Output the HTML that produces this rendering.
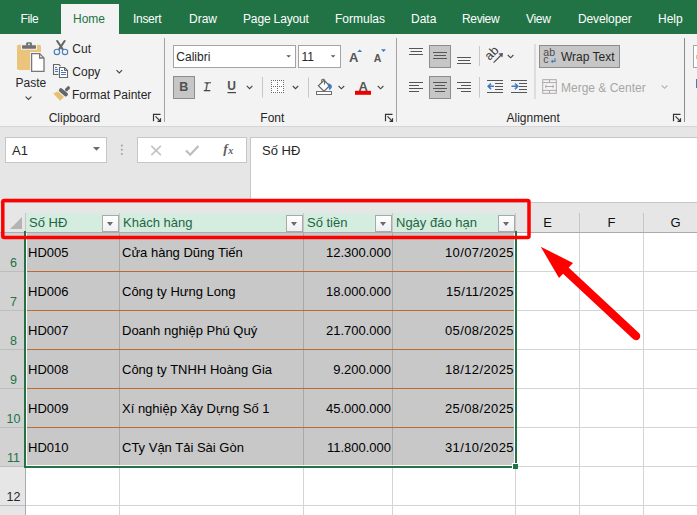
<!DOCTYPE html>
<html><head><meta charset="utf-8">
<style>
*{box-sizing:border-box;margin:0;padding:0}
html,body{width:697px;height:515px;overflow:hidden;background:#fff}
body{position:relative;font-family:"Liberation Sans",sans-serif;color:#262626}
.a{position:absolute}
.t{position:absolute;white-space:nowrap;line-height:1}
#tabs{left:0;top:0;width:697px;height:34px;background:#217346}
.tab{position:absolute;top:12px;font-size:12px;color:#fff;white-space:nowrap;line-height:14px}
#home{left:61px;top:4px;width:58px;height:30px;background:#f3f3f3}
#ribbon{left:0;top:34px;width:697px;height:92px;background:#f3f3f3}
#rb{left:0;top:126px;width:697px;height:1px;background:#d5d5d5}
#fbar{left:0;top:127px;width:697px;height:76px;background:#e6e6e6}
.lbl{font-size:12px;color:#262626}
.sep{position:absolute;width:1px;background:#c8c8c8}
.gsep{position:absolute;width:1px;background:#c6c6c6}
.box{position:absolute;background:#fff;border:1px solid #c6c6c6}
.btnsel{position:absolute;background:#c5c5c5;border:1px solid #a5a5a5}
.cell{font-size:13px;color:#000}
.dt{letter-spacing:0.4px}
.rn{font-size:12.5px}
.hd{font-size:13px;color:#1c6640}
.colh{font-size:13px;color:#111}
.ddb{position:absolute;top:215px;width:17px;height:17px;background:linear-gradient(#fff,#eef0f2);border:1px solid #a9a9a9}
.ddb:after{content:"";position:absolute;left:4px;top:6px;border-left:3.5px solid transparent;border-right:3.5px solid transparent;border-top:4px solid #6a6a6a}
</style></head><body>
<!-- tab bar -->
<div id="tabs" class="a"></div>
<div id="home" class="a"></div>
<div class="tab" style="left:20.5px;letter-spacing:-0.4px">File</div>
<div class="tab" style="left:73px;color:#217346">Home</div>
<div class="tab" style="left:133px;letter-spacing:-0.3px">Insert</div>
<div class="tab" style="left:189px">Draw</div>
<div class="tab" style="left:243px;letter-spacing:-0.15px">Page Layout</div>
<div class="tab" style="left:335px">Formulas</div>
<div class="tab" style="left:411px">Data</div>
<div class="tab" style="left:462px;letter-spacing:-0.35px">Review</div>
<div class="tab" style="left:526px;letter-spacing:-0.3px">View</div>
<div class="tab" style="left:578px;letter-spacing:-0.12px">Developer</div>
<div class="tab" style="left:658px">Help</div>

<!-- ribbon -->
<div id="ribbon" class="a"></div>
<div id="rb" class="a"></div>
<svg class="a" style="left:0;top:0" width="697" height="200" font-family="Liberation Sans" font-size="12">
<!-- Clipboard group -->
<rect x="17" y="44.8" width="24" height="25.2" rx="1.8" fill="#eac47a"/>
<path d="M21 44.5h16v5.2h-16z" fill="#f3f3f3"/>
<rect x="22" y="45.3" width="14" height="3.5" rx="0.8" fill="#707070"/>
<rect x="26.2" y="42.2" width="5.7" height="4" rx="1.2" fill="#707070"/>
<circle cx="29" cy="44.4" r="0.9" fill="#f3f3f3"/>
<path d="M30 52h11l5 5v16h-16z" fill="#f3f3f3"/>
<path d="M31.6 53.6h8l4.4 4.4v13.4h-12.4z" fill="#fff" stroke="#777" stroke-width="1.3"/>
<path d="M39.6 53.6v4.4h4.4" fill="none" stroke="#777" stroke-width="1.3"/>
<text x="15.5" y="86.8" fill="#262626">Paste</text>
<path d="M25.6 96.6l2.9 2.9l2.9-2.9" fill="none" stroke="#444" stroke-width="1.1"/>
<!-- scissors -->
<path d="M57.2 41l5.4 8.2M64.6 41l-5.4 8.2" fill="none" stroke="#666" stroke-width="2.1" stroke-linecap="round"/>
<circle cx="56.9" cy="51.9" r="2.7" fill="none" stroke="#4a7fbf" stroke-width="1.15"/>
<circle cx="65" cy="51.9" r="2.7" fill="none" stroke="#4a7fbf" stroke-width="1.15"/>
<text x="72.3" y="53.2" fill="#262626">Cut</text>
<!-- copy -->
<path d="M58.5 74.5h-5v-10h5.5l1.5 1.5" fill="none" stroke="#666" stroke-width="1.1"/>
<path d="M55 67.5h2M55 69.5h3M55 71.5h3" stroke="#3d7cc2" stroke-width="1"/>
<path d="M59.5 67.5h5l3 3v7h-8z" fill="#fff" stroke="#666" stroke-width="1.1"/>
<path d="M64.5 67.5v3h3" fill="none" stroke="#666" stroke-width="1"/>
<path d="M61 70.5h2M61 72.5h5M61 74.5h5" stroke="#3d7cc2" stroke-width="1"/>
<text x="72.3" y="76.3" fill="#262626">Copy</text>
<path d="M116.5 70.2l2.8 2.8l2.8-2.8" fill="none" stroke="#444" stroke-width="1.1"/>
<!-- format painter -->
<path d="M53.2 93.4l4.6-1.9l6.2 5.6l-3.9 3.6z" fill="#e8c072"/>
<path d="M60.9 90.2l5 4.2" stroke="#666" stroke-width="4" stroke-linecap="round"/>
<path d="M66.6 89.6l1.8-1.8" stroke="#666" stroke-width="3.2" stroke-linecap="round"/>
<text x="72" y="98.9" fill="#262626">Format Painter</text>
<text x="48.7" y="121.7" fill="#262626">Clipboard</text>
<path d="M153.5 121.3v-7h7M155.5 116.3l5 5M157.5 121.3h3v-3" fill="none" stroke="#333" stroke-width="1.2"/>
<rect x="164" y="38" width="1" height="84" fill="#a3a3a3"/>
<!-- Font group -->
<rect x="173.5" y="45.5" width="122" height="22" fill="#fff" stroke="#a3a3a3"/>
<text x="176.3" y="61" fill="#262626">Calibri</text>
<path d="M286.3 55.2h4.6l-2.3 2.3z" fill="#555"/>
<rect x="298.5" y="45.5" width="42" height="22" fill="#fff" stroke="#a3a3a3"/>
<text x="301.5" y="61.4" fill="#262626">11</text>
<path d="M330.8 55.2h4.6l-2.3 2.3z" fill="#555"/>
<text x="348.9" y="61.8" fill="#555" font-size="13" font-weight="bold">A</text>
<path d="M357.2 51.9l2.5-2.5l2.5 2.5z" fill="#3d7cc2"/>
<text x="373.8" y="61.8" fill="#555" font-size="10.5" font-weight="bold">A</text>
<path d="M381 49.2h5l-2.5 2.7z" fill="#3d7cc2"/>
<rect x="173.5" y="76.5" width="21" height="22" fill="#c6c6c6" stroke="#8c8c8c"/>
<text x="179.3" y="91.1" fill="#505050" font-size="12.5" font-weight="bold">B</text>
<text x="204.3" y="91.1" fill="#444" font-size="12.5" font-style="italic" font-family="Liberation Serif">I</text>
<path d="M204.5 82.8h6.5M203.8 90.6h6.5" stroke="#444" stroke-width="1.1"/>
<text x="227.3" y="90.3" fill="#505050" font-size="12" font-weight="bold">U</text>
<rect x="227.5" y="92" width="8.5" height="1.2" fill="#444"/>
<path d="M246.8 85.8l2.8 2.8l2.8-2.8" fill="none" stroke="#444" stroke-width="1.1"/>
<rect x="262" y="77" width="1" height="20.5" fill="#c8c8c8"/>
<rect x="271" y="80" width="13" height="13" fill="#fff"/><rect x="271" y="80" width="1" height="1" fill="#6b6b6b"/><rect x="271" y="82" width="1" height="1" fill="#6b6b6b"/><rect x="271" y="84" width="1" height="1" fill="#6b6b6b"/><rect x="271" y="86" width="1" height="1" fill="#6b6b6b"/><rect x="271" y="88" width="1" height="1" fill="#6b6b6b"/><rect x="271" y="90" width="1" height="1" fill="#6b6b6b"/><rect x="271" y="92" width="1" height="1" fill="#6b6b6b"/><rect x="273" y="80" width="1" height="1" fill="#6b6b6b"/><rect x="273" y="86" width="1" height="1" fill="#6b6b6b"/><rect x="273" y="92" width="1" height="1" fill="#6b6b6b"/><rect x="275" y="80" width="1" height="1" fill="#6b6b6b"/><rect x="275" y="86" width="1" height="1" fill="#6b6b6b"/><rect x="275" y="92" width="1" height="1" fill="#6b6b6b"/><rect x="277" y="80" width="1" height="1" fill="#6b6b6b"/><rect x="277" y="82" width="1" height="1" fill="#6b6b6b"/><rect x="277" y="84" width="1" height="1" fill="#6b6b6b"/><rect x="277" y="86" width="1" height="1" fill="#6b6b6b"/><rect x="277" y="88" width="1" height="1" fill="#6b6b6b"/><rect x="277" y="90" width="1" height="1" fill="#6b6b6b"/><rect x="277" y="92" width="1" height="1" fill="#6b6b6b"/><rect x="279" y="80" width="1" height="1" fill="#6b6b6b"/><rect x="279" y="86" width="1" height="1" fill="#6b6b6b"/><rect x="279" y="92" width="1" height="1" fill="#6b6b6b"/><rect x="281" y="80" width="1" height="1" fill="#6b6b6b"/><rect x="281" y="86" width="1" height="1" fill="#6b6b6b"/><rect x="281" y="92" width="1" height="1" fill="#6b6b6b"/><rect x="283" y="80" width="1" height="1" fill="#6b6b6b"/><rect x="283" y="82" width="1" height="1" fill="#6b6b6b"/><rect x="283" y="84" width="1" height="1" fill="#6b6b6b"/><rect x="283" y="86" width="1" height="1" fill="#6b6b6b"/><rect x="283" y="88" width="1" height="1" fill="#6b6b6b"/><rect x="283" y="90" width="1" height="1" fill="#6b6b6b"/><rect x="283" y="92" width="1" height="1" fill="#6b6b6b"/>
<path d="M292.8 86l2.7 2.7l2.7-2.7" fill="none" stroke="#444" stroke-width="1.1"/>
<rect x="308" y="77.4" width="1" height="20" fill="#c8c8c8"/>
<path d="M324 80.3l5.6 5.5l-5.6 5.3l-5.6-5.3z" fill="#fff" stroke="#666" stroke-width="1.2"/>
<path d="M321.7 83v-2.8q0-1 1-1h0.8q1 0 1 1v4.2" fill="none" stroke="#666" stroke-width="1.1"/>
<path d="M328.3 83.2q4 1.2 3.6 3.8q-0.6 2-2.6 3.2q-0.3-2.6 -1.6-4.2z" fill="#3d7cc2"/>
<rect x="316.5" y="91.5" width="15" height="3" fill="#fff" stroke="#707070" stroke-width="1"/>
<path d="M338.6 86l2.8 2.8l2.8-2.8" fill="none" stroke="#444" stroke-width="1.1"/>
<text x="358.6" y="90.5" fill="#555" font-size="13" font-weight="bold">A</text>
<rect x="355" y="90.8" width="16" height="4" fill="#ee0000"/>
<path d="M377.8 86l2.8 2.8l2.8-2.8" fill="none" stroke="#444" stroke-width="1.1"/>
<text x="260.3" y="121.8" fill="#262626">Font</text>
<path d="M385.5 121.3v-7h7M387.5 116.3l5 5M389.5 121.3h3v-3" fill="none" stroke="#333" stroke-width="1.2"/>
<rect x="396" y="38" width="1" height="84" fill="#a3a3a3"/>
<!-- Alignment group -->
<path d="M409 48.5h14M410.5 51.5h11.5M409 54.5h14" stroke="#555" stroke-width="1"/>
<rect x="429.5" y="45.5" width="21" height="22" fill="#c6c6c6" stroke="#8c8c8c"/>
<path d="M433 52.5h14M434 55.5h12M433 58.5h14" stroke="#555" stroke-width="1"/>
<path d="M457 57.5h14M458 60.5h12M457 63.5h14" stroke="#555" stroke-width="1"/>
<rect x="479" y="46" width="1" height="20" fill="#c8c8c8"/>
<g transform="translate(491.3,52.9) rotate(-45)"><text x="-7" y="4.5" fill="#404040" font-size="12.5">ab</text></g>
<path d="M493.6 62.6l7.6-7.6" fill="none" stroke="#555" stroke-width="1.3"/><path d="M503 53l-4.6 0.6l4 4z" fill="#555"/>
<path d="M507.8 55l2.8 2.8l2.8-2.8" fill="none" stroke="#444" stroke-width="1.1"/>
<path d="M409 82.5h14M409 85.5h10M409 88.5h14M409 91.5h10" stroke="#555" stroke-width="1"/>
<rect x="429.5" y="76.5" width="21" height="22" fill="#c6c6c6" stroke="#8c8c8c"/>
<path d="M433 82.5h14M435 85.5h10M433 88.5h14M435 91.5h10" stroke="#555" stroke-width="1"/>
<path d="M457 82.5h14M461 85.5h10M457 88.5h14M461 91.5h10" stroke="#555" stroke-width="1"/>
<rect x="479" y="77" width="1" height="20.5" fill="#c8c8c8"/>
<path d="M487 80.5h16M495 83.5h8M495 86.5h8M495 89.5h8M487 92.5h16" stroke="#555" stroke-width="1"/>
<path d="M488 86.3h6M491 83.5l-2.8 2.8l2.8 2.8" fill="none" stroke="#3d7cc2" stroke-width="1.6"/>
<path d="M511 80.5h16M519 83.5h8M519 86.5h8M519 89.5h8M511 92.5h16" stroke="#555" stroke-width="1"/>
<path d="M511.5 86.3h6M515 83.5l2.8 2.8l-2.8 2.8" fill="none" stroke="#3d7cc2" stroke-width="1.6"/>
<rect x="534.5" y="44" width="1" height="55" fill="#c8c8c8"/>
<rect x="539.5" y="45.5" width="80" height="22" fill="#c6c6c6" stroke="#8c8c8c"/>
<text x="543.3" y="55.9" fill="#4a4a4a" font-size="10.5">ab</text>
<text x="543.3" y="63" fill="#4a4a4a" font-size="10.5">c</text>
<path d="M555 58.2v3.2h-3" fill="none" stroke="#3d7cc2" stroke-width="1.1"/><path d="M550.8 61.4l2-1.8v3.6z" fill="#3d7cc2"/>
<text x="561" y="61" fill="#262626">Wrap Text</text>
<rect x="542.7" y="79.7" width="13.6" height="13.6" fill="#f8f4f6" stroke="#aaa" stroke-width="1"/>
<path d="M542.7 82.6h13.6M542.7 90.4h13.6M549.5 79.7v2.9M549.5 90.4v2.9" stroke="#aaa" stroke-width="1"/>
<path d="M545 86.5h9M546.6 85l-1.6 1.5l1.6 1.5M552.4 85l1.6 1.5l-1.6 1.5" fill="none" stroke="#aaa" stroke-width="1"/>
<text x="561" y="91.7" fill="#a6a6a6">Merge &amp; Center</text>
<path d="M661.8 85.5l2.8 2.8l2.8-2.8" fill="none" stroke="#b0b0b0" stroke-width="1.1"/>
<text x="506.5" y="122" fill="#262626">Alignment</text>
<path d="M673.5 121.3v-7h7M675.5 116.3l5 5M677.5 121.3h3v-3" fill="none" stroke="#333" stroke-width="1.2"/>
<rect x="684" y="38" width="1" height="84" fill="#8c8c8c"/>
<rect x="693.5" y="45.5" width="10" height="22" fill="#fff" stroke="#a3a3a3"/>
<rect x="696" y="79" width="1" height="9" fill="#3d7cc2"/><rect x="696" y="55" width="1" height="4" fill="#f0c060"/>
</svg>


<!-- formula bar -->
<div id="fbar" class="a"></div>
<div class="box" style="left:5px;top:137px;width:102px;height:26px"></div>
<div class="t" style="left:12px;top:144px;font-size:13px;color:#262626">A1</div>
<div class="box" style="left:137px;top:137px;width:110px;height:26px"></div>
<div class="box" style="left:250px;top:137px;width:460px;height:66px;border-bottom:none"></div>
<div class="t" style="left:262px;top:144px;font-size:13px;color:#262626">Số HĐ</div>

<svg class="a" style="left:0;top:130px" width="260" height="40">
<path d="M93 17h7l-3.5 3.8z" fill="#6a6a6a"/>
<circle cx="121.8" cy="15.5" r="1" fill="#a0a0a0"/><circle cx="121.8" cy="19.8" r="1" fill="#a0a0a0"/><circle cx="121.8" cy="24.1" r="1" fill="#a0a0a0"/>
<path d="M151.3 15.8l9.6 9.4M160.9 15.8l-9.6 9.4" stroke="#c4c4c4" stroke-width="1.7"/>
<path d="M186 20.5l4.2 4.2l8.2-8.6" fill="none" stroke="#bdbdbd" stroke-width="2.2"/>
<text x="223.3" y="23.3" font-family="Liberation Serif" font-style="italic" font-weight="bold" font-size="13.5" fill="#606060">f</text>
<text x="228.3" y="24.2" font-family="Liberation Serif" font-style="italic" font-weight="bold" font-size="10" fill="#606060">x</text>
</svg>
<!-- grid -->
<div class="a" style="left:0;top:202px;width:697px;height:1px;background:#c6c6c6"></div>
<div class="a" style="left:0;top:203px;width:697px;height:29px;background:#e6e6e6"></div>
<div class="a" style="left:0;top:232px;width:697px;height:1px;background:#ababab"></div>
<svg class="a" style="left:0;top:203px" width="25" height="29"><polygon points="22,14 22,26 10,26" fill="#b4b4b4"/></svg>
<div class="a" style="left:25px;top:213px;width:1px;height:19px;background:#c6c6c6"></div>
<div class="a" style="left:26px;top:213px;width:489px;height:19px;background:#d5ede0"></div>
<div class="t hd" style="left:29px;top:216px">Số HĐ</div>
<div class="ddb" style="left:102px"></div>
<div class="t hd" style="left:123px;top:216px">Khách hàng</div>
<div class="ddb" style="left:286px"></div>
<div class="t hd" style="left:307px;top:216px">Số tiền</div>
<div class="ddb" style="left:375px"></div>
<div class="t hd" style="left:396px;top:216px">Ngày đáo hạn</div>
<div class="ddb" style="left:498px"></div>
<div class="a" style="left:119px;top:213px;width:1px;height:19px;background:#c6c6c6"></div>
<div class="a" style="left:303px;top:213px;width:1px;height:19px;background:#c6c6c6"></div>
<div class="a" style="left:392px;top:213px;width:1px;height:19px;background:#c6c6c6"></div>
<div class="a" style="left:515px;top:213px;width:1px;height:19px;background:#c6c6c6"></div>
<div class="a" style="left:579px;top:213px;width:1px;height:19px;background:#c6c6c6"></div>
<div class="a" style="left:643px;top:213px;width:1px;height:19px;background:#c6c6c6"></div>
<div class="t colh" style="left:516px;width:63px;text-align:center;top:216px">E</div>
<div class="t colh" style="left:580px;width:63px;text-align:center;top:216px">F</div>
<div class="t colh" style="left:644px;width:63px;text-align:center;top:216px">G</div>
<div class="a" style="left:26px;top:233px;width:671px;height:282px;background:#fff"></div>
<div class="a" style="left:119px;top:233px;width:1px;height:282px;background:#d4d4d4"></div>
<div class="a" style="left:303px;top:233px;width:1px;height:282px;background:#d4d4d4"></div>
<div class="a" style="left:392px;top:233px;width:1px;height:282px;background:#d4d4d4"></div>
<div class="a" style="left:515px;top:233px;width:1px;height:282px;background:#d4d4d4"></div>
<div class="a" style="left:579px;top:233px;width:1px;height:282px;background:#d4d4d4"></div>
<div class="a" style="left:643px;top:233px;width:1px;height:282px;background:#d4d4d4"></div>
<div class="a" style="left:26px;top:271px;width:671px;height:1px;background:#d4d4d4"></div>
<div class="a" style="left:26px;top:310px;width:671px;height:1px;background:#d4d4d4"></div>
<div class="a" style="left:26px;top:349px;width:671px;height:1px;background:#d4d4d4"></div>
<div class="a" style="left:26px;top:388px;width:671px;height:1px;background:#d4d4d4"></div>
<div class="a" style="left:26px;top:427px;width:671px;height:1px;background:#d4d4d4"></div>
<div class="a" style="left:26px;top:466px;width:671px;height:1px;background:#d4d4d4"></div>
<div class="a" style="left:26px;top:505px;width:671px;height:1px;background:#d4d4d4"></div>
<div class="a" style="left:0;top:233px;width:25px;height:38px;background:#d2d2d2"></div>
<div class="a" style="left:0;top:271px;width:25px;height:1px;background:#bdbdbd"></div>
<div class="t rn" style="left:1px;width:25px;text-align:center;top:257px;color:#217346">6</div>
<div class="a" style="left:0;top:272px;width:25px;height:38px;background:#d2d2d2"></div>
<div class="a" style="left:0;top:310px;width:25px;height:1px;background:#bdbdbd"></div>
<div class="t rn" style="left:1px;width:25px;text-align:center;top:296px;color:#217346">7</div>
<div class="a" style="left:0;top:311px;width:25px;height:38px;background:#d2d2d2"></div>
<div class="a" style="left:0;top:349px;width:25px;height:1px;background:#bdbdbd"></div>
<div class="t rn" style="left:1px;width:25px;text-align:center;top:335px;color:#217346">8</div>
<div class="a" style="left:0;top:350px;width:25px;height:38px;background:#d2d2d2"></div>
<div class="a" style="left:0;top:388px;width:25px;height:1px;background:#bdbdbd"></div>
<div class="t rn" style="left:1px;width:25px;text-align:center;top:374px;color:#217346">9</div>
<div class="a" style="left:0;top:389px;width:25px;height:38px;background:#d2d2d2"></div>
<div class="a" style="left:0;top:427px;width:25px;height:1px;background:#bdbdbd"></div>
<div class="t rn" style="left:1px;width:25px;text-align:center;top:413px;color:#217346">10</div>
<div class="a" style="left:0;top:428px;width:25px;height:38px;background:#d2d2d2"></div>
<div class="a" style="left:0;top:466px;width:25px;height:1px;background:#bdbdbd"></div>
<div class="t rn" style="left:1px;width:25px;text-align:center;top:452px;color:#217346">11</div>
<div class="a" style="left:0;top:467px;width:25px;height:38px;background:#e6e6e6"></div>
<div class="a" style="left:0;top:505px;width:25px;height:1px;background:#bdbdbd"></div>
<div class="t rn" style="left:1px;width:25px;text-align:center;top:491px;color:#262626">12</div>
<div class="a" style="left:0;top:506px;width:25px;height:38px;background:#e6e6e6"></div>
<div class="a" style="left:0;top:544px;width:25px;height:1px;background:#bdbdbd"></div>
<div class="a" style="left:25px;top:233px;width:1px;height:282px;background:#ababab"></div>
<div class="a" style="left:27px;top:233px;width:487px;height:232px;background:#c8c8c8"></div>
<div class="a" style="left:119px;top:233px;width:1px;height:232px;background:#a8a8a8"></div>
<div class="a" style="left:303px;top:233px;width:1px;height:232px;background:#a8a8a8"></div>
<div class="a" style="left:392px;top:233px;width:1px;height:232px;background:#a8a8a8"></div>
<div class="a" style="left:27px;top:271px;width:487px;height:1px;background:#bd6a30"></div>
<div class="a" style="left:27px;top:310px;width:487px;height:1px;background:#bd6a30"></div>
<div class="a" style="left:27px;top:349px;width:487px;height:1px;background:#bd6a30"></div>
<div class="a" style="left:27px;top:388px;width:487px;height:1px;background:#bd6a30"></div>
<div class="a" style="left:27px;top:427px;width:487px;height:1px;background:#bd6a30"></div>
<div class="t cell" style="left:28px;top:246px">HD005</div>
<div class="t cell" style="left:122px;top:246px">Cửa hàng Dũng Tiến</div>
<div class="t cell" style="left:303px;width:88px;text-align:right;top:246px">12.300.000</div>
<div class="t cell dt" style="left:392px;width:122px;text-align:right;top:246px">10/07/2025</div>
<div class="t cell" style="left:28px;top:285px">HD006</div>
<div class="t cell" style="left:122px;top:285px">Công ty Hưng Long</div>
<div class="t cell" style="left:303px;width:88px;text-align:right;top:285px">18.000.000</div>
<div class="t cell dt" style="left:392px;width:122px;text-align:right;top:285px">15/11/2025</div>
<div class="t cell" style="left:28px;top:324px">HD007</div>
<div class="t cell" style="left:122px;top:324px">Doanh nghiệp Phú Quý</div>
<div class="t cell" style="left:303px;width:88px;text-align:right;top:324px">21.700.000</div>
<div class="t cell dt" style="left:392px;width:122px;text-align:right;top:324px">05/08/2025</div>
<div class="t cell" style="left:28px;top:363px">HD008</div>
<div class="t cell" style="left:122px;top:363px">Công ty TNHH Hoàng Gia</div>
<div class="t cell" style="left:303px;width:88px;text-align:right;top:363px">9.200.000</div>
<div class="t cell dt" style="left:392px;width:122px;text-align:right;top:363px">18/12/2025</div>
<div class="t cell" style="left:28px;top:402px">HD009</div>
<div class="t cell" style="left:122px;top:402px">Xí nghiệp Xây Dựng Số 1</div>
<div class="t cell" style="left:303px;width:88px;text-align:right;top:402px">45.000.000</div>
<div class="t cell dt" style="left:392px;width:122px;text-align:right;top:402px">25/08/2025</div>
<div class="t cell" style="left:28px;top:441px">HD010</div>
<div class="t cell" style="left:122px;top:441px">CTy Vận Tải Sài Gòn</div>
<div class="t cell" style="left:303px;width:88px;text-align:right;top:441px">11.800.000</div>
<div class="t cell dt" style="left:392px;width:122px;text-align:right;top:441px">31/10/2025</div>
<div class="a" style="left:24px;top:231px;width:2px;height:236px;background:#217346"></div>
<div class="a" style="left:26px;top:233px;width:1px;height:232px;background:#fff"></div>
<div class="a" style="left:514px;top:233px;width:1px;height:232px;background:#fff"></div>
<div class="a" style="left:27px;top:465px;width:487px;height:1px;background:#fff"></div>
<div class="a" style="left:515px;top:231px;width:2px;height:232px;background:#217346"></div>
<div class="a" style="left:24px;top:466px;width:488px;height:2px;background:#217346"></div>
<div class="a" style="left:512px;top:463px;width:6px;height:6px;background:#fff"></div>
<div class="a" style="left:513px;top:464px;width:5px;height:5px;background:#217346"></div>
<!-- annotations -->
<svg class="a" style="left:0;top:0" width="697" height="515">
<rect x="2.8" y="200.5" width="526.2" height="37.1" rx="1.5" ry="1.5" fill="none" stroke="#ff0000" stroke-width="3.5"/>
<line x1="563" y1="268" x2="636" y2="336" stroke="#ff0000" stroke-width="8.5" stroke-linecap="round"/>
<polygon points="540.7,246.7 573,263 559,278" fill="#ff0000"/>
</svg>
</body></html>
